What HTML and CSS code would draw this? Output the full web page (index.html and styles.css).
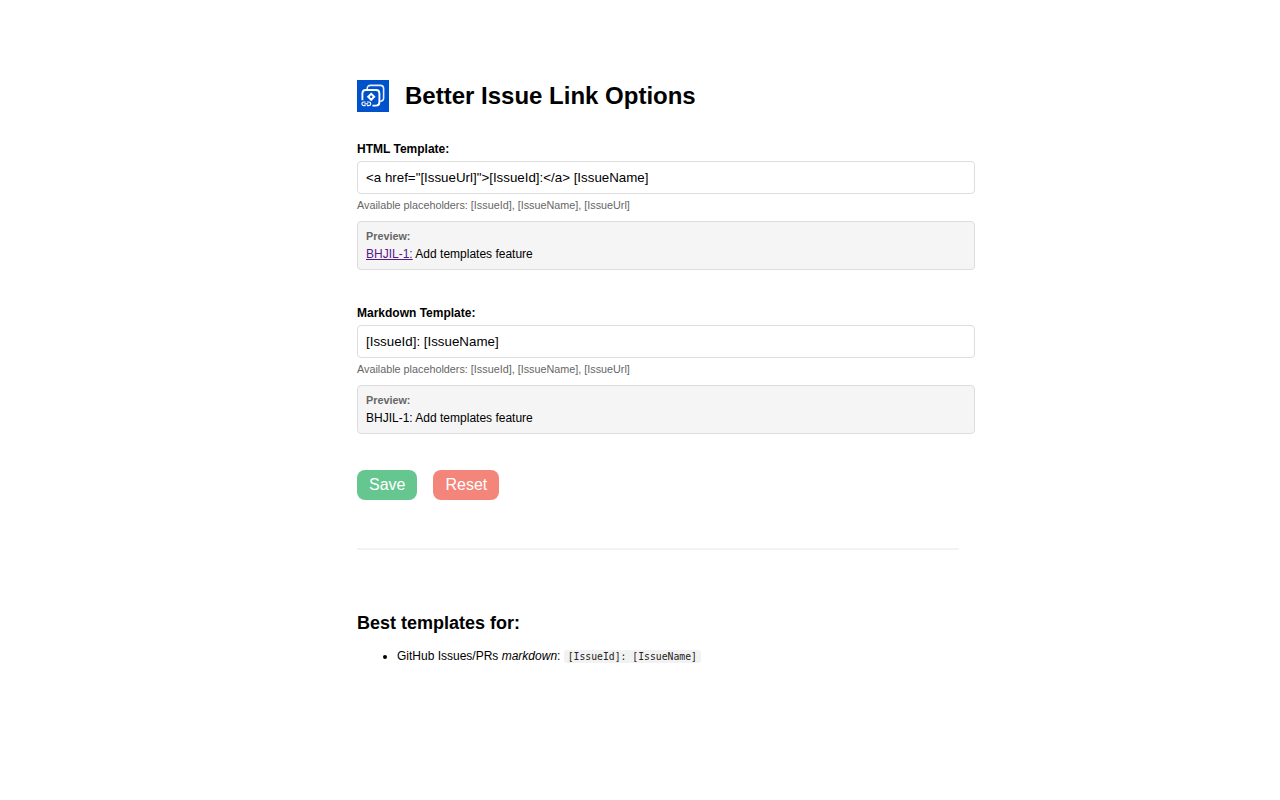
FILE: index.html
```html
<!DOCTYPE html>
<html lang="en">
<head>
<meta charset="utf-8">
<title>Better Issue Link Options</title>
<link rel="stylesheet" href="styles.css">
</head>
<body>
<main class="page">
  <header class="title-row">
    <svg class="logo" width="32" height="32" viewBox="0 0 32 32" aria-hidden="true">
      <rect width="32" height="32" fill="#0052cc"/>
      <path d="M10.2 9.6 V8.6 C10.2 6.6 11.4 5.4 13.4 5.4 H23.2 C25.4 5.4 26.6 6.6 26.6 8.8 V18 C26.6 20 25.4 21.2 23.2 21.2" fill="none" stroke="#fff" stroke-width="1.6" opacity=".9"/>
      <path d="M5.4 20.2 V13.4 C5.4 11.2 6.6 10 8.8 10 H19 C21.2 10 22.4 11.2 22.4 13.4 V22.2 C22.4 24.4 21.2 25.6 19 25.6 H15.4" fill="none" stroke="#fff" stroke-width="1.9"/>
      <path d="M14.2 12.4 L18.6 16.8 L14.2 21.2 L9.8 16.8 Z" fill="#fff"/>
      <circle cx="14.2" cy="16.8" r="1.2" fill="#0052cc"/>
      <path d="M8.6 22 H6.8 C5.6 22 4.9 22.8 4.9 23.8 C4.9 24.8 5.6 25.6 6.8 25.6 H8.6 M10 22 H11.8 C13 22 13.7 22.8 13.7 23.8 C13.7 24.8 13 25.6 11.8 25.6 H10 M7.4 23.8 H11.2" fill="none" stroke="#fff" stroke-width="1.2"/>
    </svg>
    <h1 class="title">Better Issue Link Options</h1>
  </header>

  <section class="field">
    <label class="field-label" for="html-template">HTML Template:</label>
    <input class="field-input" id="html-template" type="text" value="&lt;a href=&quot;[IssueUrl]&quot;&gt;[IssueId]:&lt;/a&gt; [IssueName]">
    <p class="hint">Available placeholders: [IssueId], [IssueName], [IssueUrl]</p>
    <div class="preview">
      <div class="preview-label">Preview:</div>
      <div class="preview-body"><a class="preview-link" href="#">BHJIL-1:</a> Add templates feature</div>
    </div>
  </section>

  <section class="field">
    <label class="field-label" for="md-template">Markdown Template:</label>
    <input class="field-input" id="md-template" type="text" value="[IssueId]: [IssueName]">
    <p class="hint">Available placeholders: [IssueId], [IssueName], [IssueUrl]</p>
    <div class="preview">
      <div class="preview-label">Preview:</div>
      <div class="preview-body">BHJIL-1: Add templates feature</div>
    </div>
  </section>

  <div class="actions">
    <button class="btn btn-save" type="button">Save</button>
    <button class="btn btn-reset" type="button">Reset</button>
  </div>

  <hr class="divider">

  <h2 class="subtitle">Best templates for:</h2>
  <ul class="tips">
    <li>GitHub Issues/PRs <em>markdown</em>: <code class="code">[IssueId]: [IssueName]</code></li>
  </ul>
</main>
</body>
</html>
```
FILE: styles.css
```css
* { box-sizing: border-box; }
html, body { margin: 0; padding: 0; background: #fff; }
body { font-family: "Liberation Sans", Arial, sans-serif; color: #000; }
.page { width: 618px; margin-left: 357px; padding-top: 80px; }
.title-row { display: flex; align-items: center; gap: 16px; height: 32px; margin-bottom: 30px; }
.logo { display: block; flex: none; }
.title { margin: 0; font-size: 24px; font-weight: 700; line-height: 32px; }
.field { margin-bottom: 36px; }
.field-label { display: block; font-size: 12px; font-weight: 700; line-height: 14px; margin-bottom: 5px; }
.field-input { display: block; width: 100%; height: 33px; padding: 0 8px; border: 1px solid #ddd; border-radius: 4px; font-family: "Liberation Sans", Arial, sans-serif; font-size: 13.33px; color: #000; background: #fff; outline: none; }
.hint { margin: 5px 0 0; font-size: 10.8px; line-height: 13px; color: #666; }
.preview { margin-top: 9px; height: 49px; padding: 8px; background: #f5f5f5; border: 1px solid #ddd; border-radius: 4px; }
.preview-label { font-size: 10.8px; font-weight: 700; line-height: 13px; color: #666; }
.preview-body { margin-top: 3px; font-size: 12px; line-height: 16px; }
.preview-link { color: #551a8b; }
.actions { display: flex; gap: 16px; }
.btn { height: 30px; padding: 0 12px; border: 0; border-radius: 8px; font-family: "Liberation Sans", Arial, sans-serif; font-size: 16px; color: #fff; }
.btn-save { background: #66c68f; }
.btn-reset { background: #f3857a; }
.divider { width: 602px; height: 2px; margin: 48px 0 0; border: 0; background: #f3f3f3; }
.subtitle { margin: 63px 0 0; font-size: 18px; font-weight: 700; line-height: 21px; }
.tips { margin: 14px 0 0; padding-left: 40px; font-size: 12px; line-height: 16px; }
.code { padding: 1px 4px; background: #f2f2f2; border-radius: 3px; font-family: "DejaVu Sans Mono", monospace; font-size: 9.75px; color: #222; }
```
